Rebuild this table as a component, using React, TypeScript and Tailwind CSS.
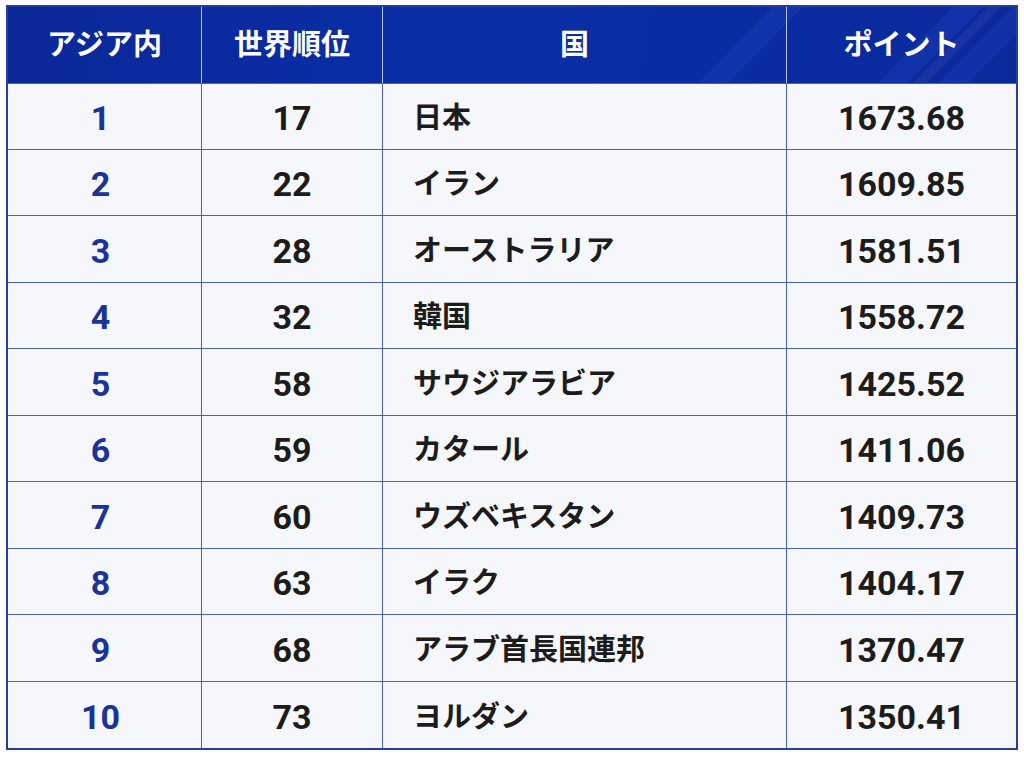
const rows = [
  { asia: 1, world: 17, country: "日本", points: "1673.68" },
  { asia: 2, world: 22, country: "イラン", points: "1609.85" },
  { asia: 3, world: 28, country: "オーストラリア", points: "1581.51" },
  { asia: 4, world: 32, country: "韓国", points: "1558.72" },
  { asia: 5, world: 58, country: "サウジアラビア", points: "1425.52" },
  { asia: 6, world: 59, country: "カタール", points: "1411.06" },
  { asia: 7, world: 60, country: "ウズベキスタン", points: "1409.73" },
  { asia: 8, world: 63, country: "イラク", points: "1404.17" },
  { asia: 9, world: 68, country: "アラブ首長国連邦", points: "1370.47" },
  { asia: 10, world: 73, country: "ヨルダン", points: "1350.41" },
];

const headers = ["アジア内", "世界順位", "国", "ポイント"];

function HeaderStripes() {
  return (
    <svg
      className="pointer-events-none absolute inset-0 h-full w-full"
      viewBox="0 0 1008 77"
      preserveAspectRatio="none"
    >
      <polygon points="690,77 720,77 795,0 765,0" fill="#2b55d6" opacity="0.2" />
      <polygon points="870,77 900,77 975,0 945,0" fill="#2b55d6" opacity="0.2" />
      <polygon points="905,77 918,77 993,0 980,0" fill="#ffffff" opacity="0.05" />
      <polygon points="930,77 960,77 1008,28 1008,0 1005,0" fill="#2b55d6" opacity="0.18" />
    </svg>
  );
}

export default function App() {
  return (
    <div className="min-h-[768px] w-[1024px] bg-white pl-[6px] pt-[5px] font-['Roboto','Noto_Sans_CJK_JP',sans-serif]">
      <div className="w-[1012px] border-2 border-[#2a3d9f] bg-[#f6f7fa]">
        <div className="relative grid h-[76px] grid-cols-[194px_181px_404px_1fr] bg-[linear-gradient(100deg,#0a2898_0%,#0b2ea7_45%,#0a2a9c_100%)]">
          <HeaderStripes />
          {headers.map((h, i) => (
            <div
              key={h}
              className={`relative flex items-center justify-center pt-[2px] text-[29px] font-bold text-white ${
                i < 3 ? "border-r border-[#b9c6ee]" : ""
              } ${i === 2 ? "pr-5" : ""}`}
            >
              {h}
            </div>
          ))}
        </div>
        {rows.map((r, idx) => (
          <div
            key={r.asia}
            className={`grid h-[66.5px] grid-cols-[194px_181px_404px_1fr] ${
              idx < rows.length - 1 ? "border-b border-[#4a62b6]" : ""
            } ${idx === 0 ? "border-t border-[#2a3d9f]" : ""}`}
          >
            <div className="flex items-center justify-center border-r border-[#4a62b6] pr-2 pt-[5px] text-[34px] font-bold text-[#1a3399]">
              {r.asia}
            </div>
            <div className="flex items-center justify-center border-r border-[#4a62b6] pt-[5px] text-[34px] font-bold text-[#1c1c1c]">
              {r.world}
            </div>
            <div className="flex items-center border-r border-[#4a62b6] pl-[30px] pt-[5px] text-[29px] font-bold text-[#1c1c1c]">
              {r.country}
            </div>
            <div className="flex items-center justify-center pt-[5px] text-[34px] font-bold text-[#1c1c1c]">
              {r.points}
            </div>
          </div>
        ))}
      </div>
    </div>
  );
}
